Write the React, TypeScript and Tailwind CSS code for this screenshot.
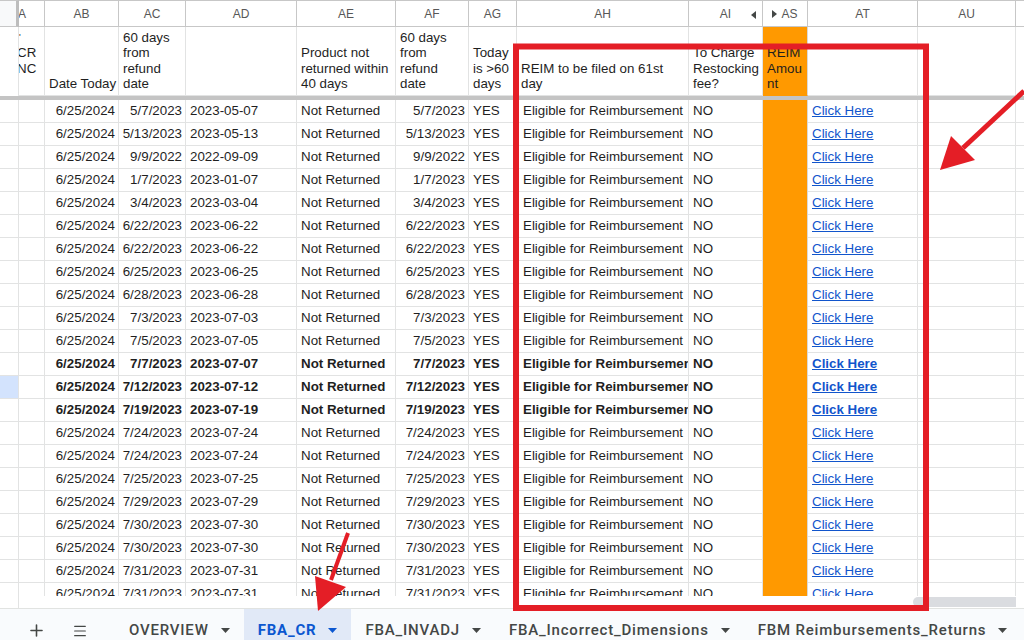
import React from 'react';
import { Plus, Menu } from 'lucide-react';

const GRID =
  'grid grid-cols-[19px_26px_74px_67px_111px_99px_73px_48px_172px_74px_45px_110px_98px_1fr]';

type Row = { ac: string; ad: string; bold?: boolean; selected?: boolean };

const rows: Row[] = [
  { ac: '5/7/2023', ad: '2023-05-07' },
  { ac: '5/13/2023', ad: '2023-05-13' },
  { ac: '9/9/2022', ad: '2022-09-09' },
  { ac: '1/7/2023', ad: '2023-01-07' },
  { ac: '3/4/2023', ad: '2023-03-04' },
  { ac: '6/22/2023', ad: '2023-06-22' },
  { ac: '6/22/2023', ad: '2023-06-22' },
  { ac: '6/25/2023', ad: '2023-06-25' },
  { ac: '6/28/2023', ad: '2023-06-28' },
  { ac: '7/3/2023', ad: '2023-07-03' },
  { ac: '7/5/2023', ad: '2023-07-05' },
  { ac: '7/7/2023', ad: '2023-07-07', bold: true },
  { ac: '7/12/2023', ad: '2023-07-12', bold: true, selected: true },
  { ac: '7/19/2023', ad: '2023-07-19', bold: true },
  { ac: '7/24/2023', ad: '2023-07-24' },
  { ac: '7/24/2023', ad: '2023-07-24' },
  { ac: '7/25/2023', ad: '2023-07-25' },
  { ac: '7/29/2023', ad: '2023-07-29' },
  { ac: '7/30/2023', ad: '2023-07-30' },
  { ac: '7/30/2023', ad: '2023-07-30' },
  { ac: '7/31/2023', ad: '2023-07-31' },
  { ac: '7/31/2023', ad: '2023-07-31' },
];

const cell = 'border-r border-b border-[#e2e3e3] pl-[4px] pr-[3px] overflow-hidden whitespace-nowrap flex items-center';
const letter = 'border-r border-b border-t border-[#c7c7c7] flex items-center justify-center text-[12px] text-[#575757]';
const head = 'border-r border-b border-[#e2e3e3] pl-[4px] pr-[3px] pb-[3px] flex flex-col justify-end leading-[15.6px] overflow-hidden';

const Caret = ({ className }: { className: string }) => (
  <svg width="9" height="5" viewBox="0 0 9 5" className={className}>
    <path d="M0 0h9L4.5 5z" fill="currentColor" />
  </svg>
);

const tabs = [
  { name: 'OVERVIEW' },
  { name: 'FBA_CR', active: true },
  { name: 'FBA_INVADJ' },
  { name: 'FBA_Incorrect_Dimensions' },
  { name: 'FBM Reimbursements_Returns' },
];

export default function App() {
  return (
    <div className="relative w-[1024px] h-[640px] overflow-hidden bg-white flex flex-col font-['Liberation_Sans',Arial,sans-serif] text-[13.33px] text-[#1f1f1f]">
      {/* column letters */}
      <div className={`${GRID} h-[27px] shrink-0`}>
        <div className="bg-[#f8f9fa] border-t border-b border-[#c7c7c7] border-r-[3px] border-r-[#bdbdbd]" />
        <div className={`${letter} justify-start overflow-hidden`}>
          <span className="-ml-[1px]">A</span>
        </div>
        <div className={letter}>AB</div>
        <div className={letter}>AC</div>
        <div className={letter}>AD</div>
        <div className={letter}>AE</div>
        <div className={letter}>AF</div>
        <div className={letter}>AG</div>
        <div className={letter}>AH</div>
        <div className={`${letter} relative`}>
          AI
          <svg width="5" height="8" viewBox="0 0 5 8" className="absolute right-[6px] top-[10px] text-[#444746]">
            <path d="M5 0v8L0 4z" fill="currentColor" />
          </svg>
        </div>
        <div className={`${letter} gap-[4px]`}>
          <svg width="5" height="8" viewBox="0 0 5 8" className="text-[#444746]">
            <path d="M0 0v8l5-4z" fill="currentColor" />
          </svg>
          AS
        </div>
        <div className={letter}>AT</div>
        <div className={letter}>AU</div>
        <div className="border-t border-b border-[#c7c7c7]" />
      </div>

      {/* header row */}
      <div className={`${GRID} h-[69px] shrink-0`}>
        <div className="border-r border-[#e2e3e3]" />
        <div className={head}>
          <div className="-ml-[6px] whitespace-nowrap">
            <div className="text-[9px] leading-[15.6px] pl-[2px]">'</div>
            <div>CR</div>
            <div>NC</div>
            <div>&nbsp;</div>
          </div>
        </div>
        <div className={`${head} whitespace-nowrap`}>Date Today</div>
        <div className={head}>60 days from refund date</div>
        <div className={head} />
        <div className={head}>Product not returned within 40 days</div>
        <div className={`${head} pr-[8px]`}>60 days from refund date</div>
        <div className={head}>Today is &gt;60 days</div>
        <div className={head}>REIM to be filed on 61st day</div>
        <div className={head}>To Charge Restocking fee?</div>
        <div className={`${head} bg-[#ff9900] border-[#ff9900] border-r-[#d9d9d9] break-words`}>REIM Amount</div>
        <div className={head} />
        <div className={head} />
        <div />
      </div>

      {/* frozen row divider */}
      <div className="h-[4px] shrink-0 bg-[#c4c4c4]" />

      {/* data rows */}
      <div className="flex-1 overflow-hidden">
        {rows.map((r, i) => (
          <div key={i} className={`${GRID} h-[23px] ${r.bold ? 'font-bold' : ''}`}>
            <div className={`border-r border-b border-[#e2e3e3] ${r.selected ? 'bg-[#d3e3fd]' : ''}`} />
            <div className={cell} />
            <div className={`${cell} justify-end`}>6/25/2024</div>
            <div className={`${cell} justify-end`}>{r.ac}</div>
            <div className={cell}>{r.ad}</div>
            <div className={cell}>Not Returned</div>
            <div className={`${cell} justify-end`}>{r.ac}</div>
            <div className={cell}>YES</div>
            <div className={`${cell} pl-[6px]`}>Eligible for Reimbursement</div>
            <div className={cell}>NO</div>
            <div className="bg-[#ff9900] border-r border-[#d9d9d9]" />
            <div className={cell}>
              <span className="text-[#1155cc] underline">Click Here</span>
            </div>
            <div className={cell} />
            <div className="border-b border-[#e2e3e3]" />
          </div>
        ))}
      </div>

      {/* horizontal scroll strip */}
      <div className="h-[12px] shrink-0 flex items-start">
        <div className="w-[19px] h-full border-r border-[#e2e3e3]" />
        <div className="flex-1" />
        <div className="mt-[1px] w-[103px] h-[10px] bg-[#dadce0] rounded-l-[5px] mr-[8px]" />
      </div>

      {/* sheet tabs */}
      <div className="h-[32px] shrink-0 flex items-stretch overflow-hidden bg-[#f9fbfd] border-t border-[#e1e3e1] font-['Roboto',sans-serif] font-medium text-[15px] text-[#444746]">
        <div className="w-[72px] shrink-0 flex items-center justify-center pl-[1px] pt-[12px]">
          <Plus size={19} strokeWidth={2} />
        </div>
        <div className="w-[16px] shrink-0 flex items-center justify-center pt-[12px]">
          <Menu size={22} strokeWidth={1.8} />
        </div>
        <div className="w-[27px] shrink-0" />
        {tabs.map((t) => (
          <div
            key={t.name}
            className={`shrink-0 whitespace-nowrap flex items-center gap-[12px] px-[14px] pt-[12px] tracking-[0.8px] ${
              t.active ? 'bg-[#e1e9f7] text-[#0b57d0] font-bold' : ''
            }`}
          >
            <span>{t.name}</span>
            <Caret className={t.active ? 'text-[#0b57d0]' : 'text-[#444746]'} />
          </div>
        ))}
      </div>

      {/* red annotations */}
      <svg className="absolute inset-0 pointer-events-none" width="1024" height="640" viewBox="0 0 1024 640">
        <rect x="516" y="46.5" width="410" height="561.5" fill="none" stroke="#e41e26" strokeWidth="6" />
        <line x1="1024" y1="91" x2="963" y2="148" stroke="#e41e26" strokeWidth="5" />
        <polygon points="940,170 951,136 975,160" fill="#e41e26" />
        <line x1="348" y1="533" x2="331" y2="580" stroke="#e41e26" strokeWidth="4" />
        <polygon points="318,611 315,576 346,587" fill="#e41e26" />
      </svg>
    </div>
  );
}
